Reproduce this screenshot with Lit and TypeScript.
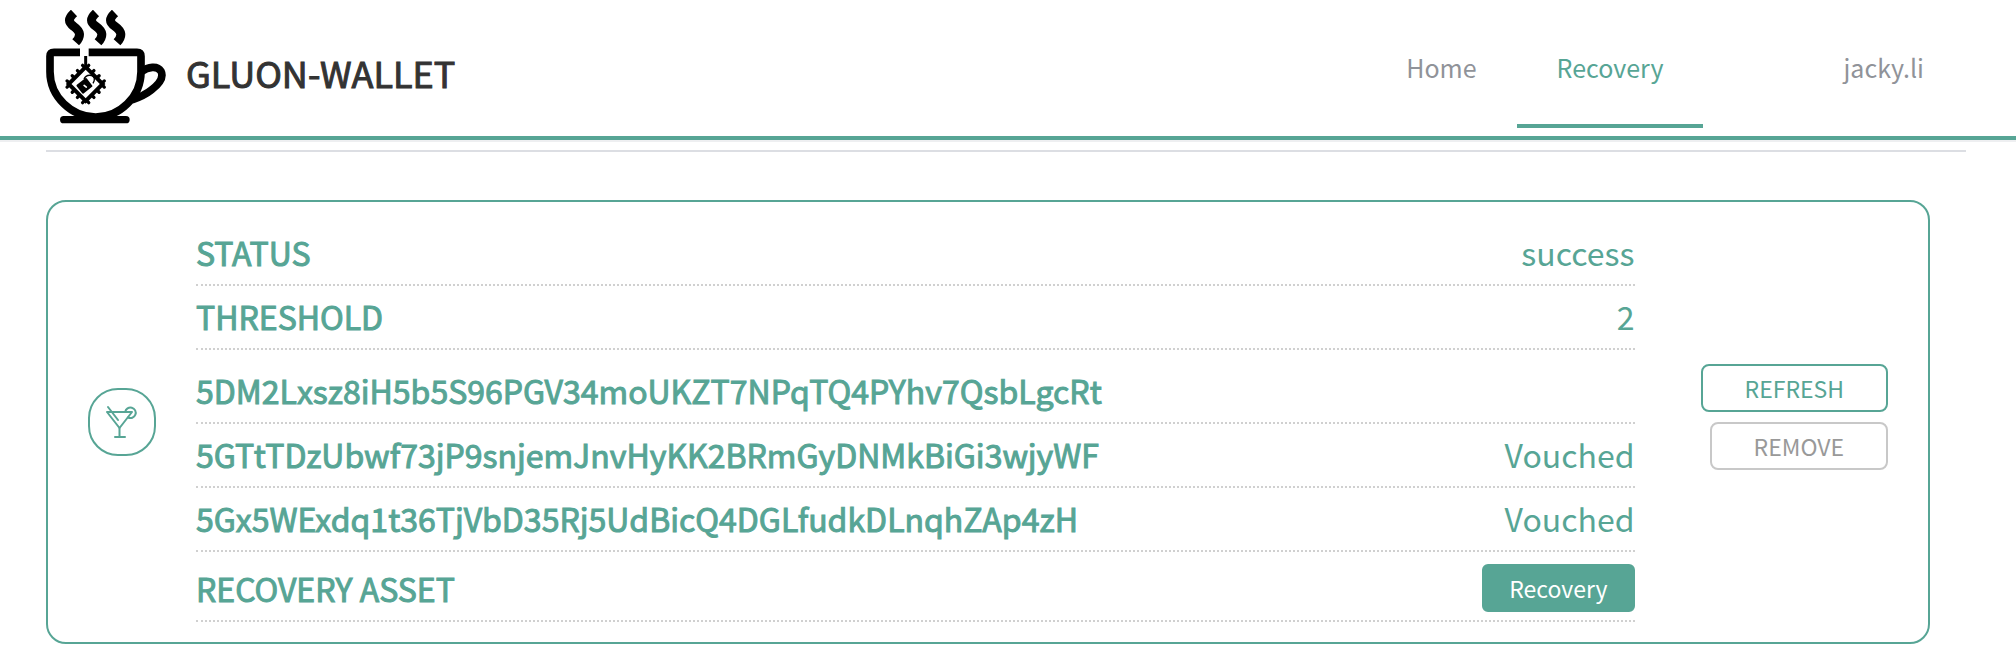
import { LitElement, html, css, svg } from "lit";
import { customElement, property } from "lit/decorators.js";

const logo = svg`
  <svg class="logo" viewBox="18 30 360 342" width="120" height="114" aria-hidden="true">
    <g fill="none" stroke="#000">
      <g stroke-width="27">
        <path d="M102 39C84 56 84 66 101 79C122 94 124 108 107 127" />
        <path d="M168 39C150 56 150 66 168 79C189 94 191 108 174 127" />
        <path d="M225 39C207 56 207 66 225 79C246 94 248 108 231 127" />
      </g>
      <path stroke-width="23" d="M120 157H42Q30 157 30 169V215C30 290 95 351 167 351S303 290 303 215V169Q303 157 291 157H146" />
      <path stroke-width="23" stroke-linejoin="round" d="M303 216C325 200 352 196 363 214C373 234 352 256 334 270C318 283 298 292 276 300" />
      <path stroke-width="22" stroke-linecap="round" d="M71 359H258" />
      <path stroke-width="9" d="M137 168V204" />
    </g>
    <g transform="translate(137 252) rotate(45)">
      <path fill="none" stroke="#000" stroke-width="10" stroke-linecap="round"
        d="M-33 -46V46M-11 -46V46M11 -46V46M33 -46V46M-46 -33H46M-46 -11H46M-46 11H46M-46 33H46" />
      <rect x="-36" y="-36" width="72" height="72" fill="#fff" stroke="#000" stroke-width="12" />
    </g>
    <path d="M132 238C138 222 160 222 163 236Q164 242 159 250" fill="none" stroke="#000" stroke-width="4" />
    <g transform="translate(133 257) rotate(-38)">
      <rect x="-19" y="-16" width="38" height="33" rx="3" />
      <path d="M0 -1L2 7" stroke="#fff" stroke-width="5" stroke-linecap="round" />
    </g>
  </svg>
`;

const cocktail = svg`
  <svg viewBox="0 0 32 34" width="32" height="34" fill="none" stroke="currentColor"
    stroke-width="2" stroke-linecap="round" stroke-linejoin="round" aria-hidden="true">
    <path d="M1 7H26L13.500 23Z" />
    <path d="M13.500 23V32M9 32H19M2 2L12 15" />
    <path d="M19.200 7A5.300 5.300 0 1 1 22 12.500" />
  </svg>
`;

@customElement("wallet-header")
export class WalletHeader extends LitElement {
  @property() user = "";

  static styles = css`
    :host {
      display: block;
      border-bottom: 2px solid #eeeff1;
    }
    .bar {
      display: flex;
      justify-content: space-between;
      align-items: flex-start;
      padding: 8px 52px 8px 46px;
      border-bottom: 4px solid #57a595;
    }
    .brand {
      display: flex;
      align-items: center;
      gap: 20px;
      color: #333;
      text-decoration: none;
      padding-top: 2px;
    }
    .logo {
      display: block;
    }
    .name {
      font-size: 36px;
      line-height: 52px;
      padding-top: 10px;
      -webkit-text-stroke: 1px currentColor;
    }
    .nav {
      display: flex;
    }
    .item {
      padding: 2px 40px 0;
      border-bottom: 4px solid transparent;
      font-size: 25px;
      line-height: 114px;
      color: #909399;
      text-decoration: none;
    }
    .active {
      color: #57a595;
      border-color: #57a595;
    }
    .user {
      margin-left: 100px;
    }
  `;

  render() {
    return html`
      <header class="bar">
        <a class="brand" href="#">${logo}<span class="name">GLUON-WALLET</span></a>
        <nav class="nav">
          <a class="item" href="#home">Home</a>
          <a class="item active" href="#recovery" aria-current="page">Recovery</a>
          <a class="item user" href="#account">${this.user}</a>
        </nav>
      </header>
    `;
  }
}

interface Friend {
  address: string;
  state: string;
}

@customElement("recovery-card")
export class RecoveryCard extends LitElement {
  @property() status = "";
  @property({ type: Number }) threshold = 0;
  @property({ attribute: false }) friends: Friend[] = [];

  static styles = css`
    :host {
      display: block;
      color: #57a595;
    }
    .card {
      display: flex;
      align-items: center;
      padding: 20px 40px;
      border: 2px solid #57a595;
      border-radius: 20px;
    }
    .badge {
      display: flex;
      align-items: center;
      justify-content: center;
      flex: none;
      box-sizing: border-box;
      width: 68px;
      height: 68px;
      border: 2px solid #57a595;
      border-radius: 30px;
    }
    .details {
      flex: 1;
      min-width: 0;
      margin: 0 66px 0 40px;
    }
    .row {
      display: flex;
      align-items: center;
      justify-content: space-between;
      padding: 8px 0 10px;
      border-bottom: 2px dotted #d0d0d0;
      font-size: 32px;
      line-height: 44px;
    }
    .friends {
      margin: 10px 0 0;
    }
    .label {
      -webkit-text-stroke: 1px currentColor;
    }
    .value {
      margin: 0;
    }
    dl {
      margin: 0;
    }
    .asset {
      padding: 12px 0 8px;
    }
    .actions {
      display: flex;
      flex-direction: column;
      align-items: flex-end;
    }
    .button {
      box-sizing: border-box;
      height: 48px;
      padding: 0 42px;
      border: 2px solid #57a595;
      border-radius: 8px;
      background: #fff;
      color: #57a595;
      font-family: inherit;
      font-size: 23px;
      line-height: 44px;
      cursor: pointer;
    }
    .actions .button {
      margin-bottom: 10px;
    }
    .actions .muted {
      border-color: #c8c8c8;
      color: #999;
    }
    .solid {
      display: block;
      padding: 0 25px;
      border-radius: 6px;
      background: #57a595;
      color: #fff;
    }
  `;

  render() {
    return html`
      <section class="card">
        <div class="badge">${cocktail}</div>
        <div class="details">
          <dl>
            <div class="row"><dt class="label">STATUS</dt><dd class="value">${this.status}</dd></div>
            <div class="row"><dt class="label">THRESHOLD</dt><dd class="value">${this.threshold}</dd></div>
          </dl>
          <dl class="friends">
            ${this.friends.map(
              (f) => html`<div class="row"><dt class="label">${f.address}</dt><dd class="value">${f.state}</dd></div>`
            )}
          </dl>
          <div class="row asset">
            <span class="label">RECOVERY ASSET</span>
            <button class="button solid" type="button">Recovery</button>
          </div>
        </div>
        <div class="actions">
          <button class="button" type="button">REFRESH</button>
          <button class="button muted" type="button">REMOVE</button>
        </div>
      </section>
    `;
  }
}

@customElement("app-root")
export class AppRoot extends LitElement {
  static styles = css`
    :host {
      display: block;
      min-height: 100vh;
      background: #fff;
      font-family: "Noto Sans CJK SC", "Noto Sans", sans-serif;
    }
    .rule {
      margin: 8px 50px 48px 46px;
      border: 0;
      border-top: 2px solid #dcdee3;
    }
    .content {
      padding: 0 86px 24px 46px;
    }
  `;

  private friends: Friend[] = [
    { address: "5DM2Lxsz8iH5b5S96PGV34moUKZT7NPqTQ4PYhv7QsbLgcRt", state: "" },
    { address: "5GTtTDzUbwf73jP9snjemJnvHyKK2BRmGyDNMkBiGi3wjyWF", state: "Vouched" },
    { address: "5Gx5WExdq1t36TjVbD35Rj5UdBicQ4DGLfudkDLnqhZAp4zH", state: "Vouched" },
  ];

  render() {
    return html`
      <wallet-header user="jacky.li"></wallet-header>
      <hr class="rule" />
      <main class="content">
        <recovery-card status="success" threshold="2" .friends=${this.friends}></recovery-card>
      </main>
    `;
  }
}
